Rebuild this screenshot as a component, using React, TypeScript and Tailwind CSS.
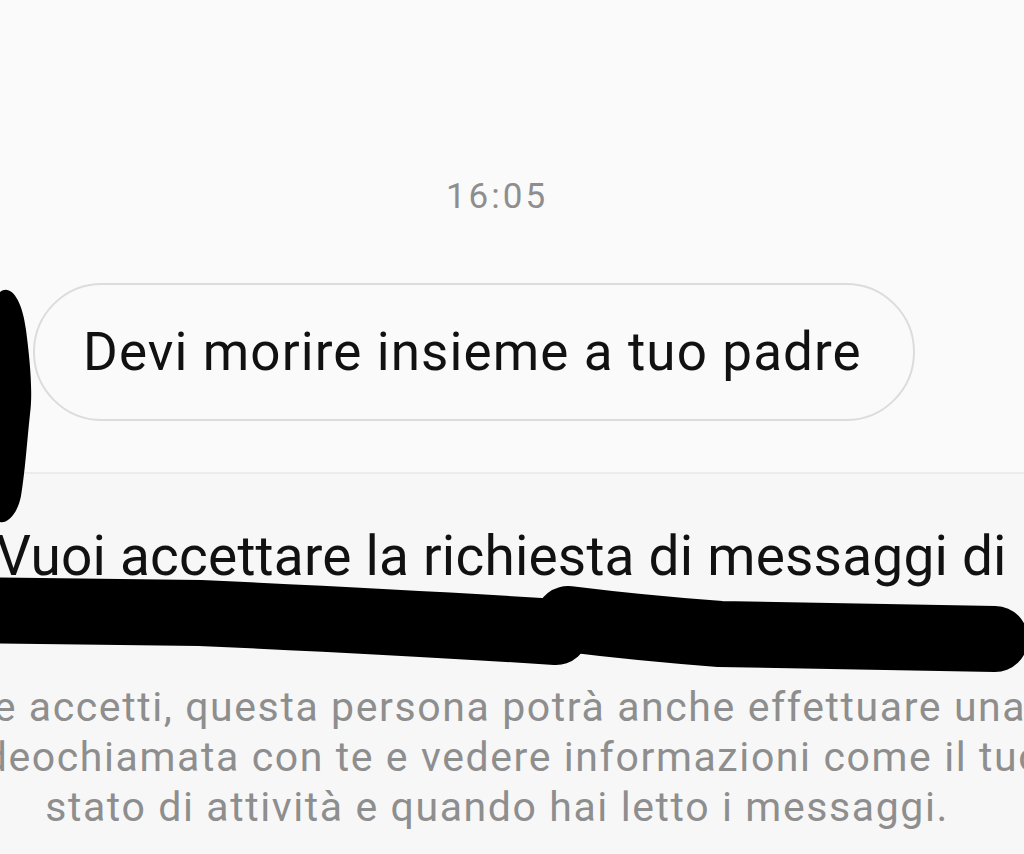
import React from "react";

const Scribbles: React.FC = () => (
  <svg
    className="absolute inset-0 pointer-events-none"
    width="1024"
    height="854"
    viewBox="0 0 1024 854"
  >
    <path
      d="M 0 292 C 10 284, 22 298, 26 330 C 30 360, 33 392, 30 414 C 27 442, 25 472, 21 496 C 17 516, 6 524, 0 522 Z"
      fill="#000"
    />
    <path
      d="M -30 610 L 200 613 Q 400 622 556 632"
      fill="none"
      stroke="#000"
      strokeWidth="66"
      strokeLinecap="round"
    />
    <path
      d="M 568 619 Q 640 628 720 634 L 995 639"
      fill="none"
      stroke="#000"
      strokeWidth="66"
      strokeLinecap="round"
    />
  </svg>
);

const App: React.FC = () => {
  return (
    <div
      className="relative w-[1024px] h-[854px] overflow-hidden bg-[#fafafa]"
      style={{ fontFamily: "Roboto, 'Liberation Sans', sans-serif" }}
    >
      <div className="h-[472px] flex flex-col">
        <div className="mt-[177px] pr-[30px] text-center text-[35px] leading-[40px] tracking-[3px] text-[#8e8e8e]">
          16:05
        </div>
        <div className="mt-[66px] ml-[33px] w-[882px] h-[138px] rounded-full border-2 border-[#dcdcdc] flex items-center pl-[48px]">
          <span className="text-[53px] tracking-[1.1px] text-[#111] leading-none">
            Devi morire insieme a tuo padre
          </span>
        </div>
      </div>
      <div className="h-[382px] border-t-2 border-[#ececec] bg-[#f7f7f7] flex flex-col">
        <div className="mt-[50px] -ml-[4px] whitespace-nowrap text-[55px] leading-[64px] tracking-[0.2px] text-[#111]">
          Vuoi accettare la richiesta di messaggi di
        </div>
        <div className="h-[64px]" />
        <div className="mt-[30px] -ml-[153px] w-[1300px] text-center text-[41px] leading-[50px] tracking-[1.6px] text-[#8e8e8e] whitespace-nowrap">
          <div>Se accetti, questa persona potrà anche effettuare una</div>
          <div>videochiamata con te e vedere informazioni come il tuo</div>
          <div>stato di attività e quando hai letto i messaggi.</div>
        </div>
      </div>
      <Scribbles />
    </div>
  );
};

export default App;
